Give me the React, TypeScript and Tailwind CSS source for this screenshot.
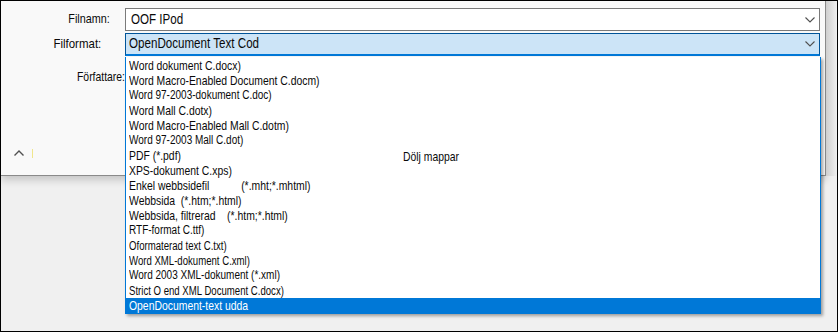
import React from "react";

interface ListItem {
  label: string;
  size: string;
}

const items: ListItem[] = [
  { label: "Word dokument C.docx)", size: "text-[13px]" },
  { label: "Word Macro-Enabled Document C.docm)", size: "text-[13px]" },
  { label: "Word 97-2003-dokument C.doc)", size: "text-[12.5px]" },
  { label: "Word Mall C.dotx)", size: "text-[13px]" },
  { label: "Word Macro-Enabled Mall C.dotm)", size: "text-[13px]" },
  { label: "Word 97-2003 Mall C.dot)", size: "text-[12.5px]" },
  { label: "PDF (*.pdf)", size: "text-[13px]" },
  { label: "XPS-dokument C.xps)", size: "text-[13px]" },
  { label: "Enkel webbsidefil           (*.mht;*.mhtml)", size: "text-[13px]" },
  { label: "Webbsida  (*.htm;*.html)", size: "text-[13px]" },
  { label: "Webbsida, filtrerad    (*.htm;*.html)", size: "text-[13px]" },
  { label: "RTF-format C.ttf)", size: "text-[12.5px]" },
  { label: "Oformaterad text C.txt)", size: "text-[12px]" },
  { label: "Word XML-dokument C.xml)", size: "text-[12px]" },
  { label: "Word 2003 XML-dokument (*.xml)", size: "text-[12.5px]" },
  { label: "Strict O end XML Document C.docx)", size: "text-[12px]" },
];

// liten nedåtpil i kombinationsrutorna
const Chevron = () => (
  <svg width="10" height="6" viewBox="0 0 10 6" className="shrink-0">
    <path d="M0.5 0.5 L5 5 L9.5 0.5" fill="none" stroke="#505050" strokeWidth="1.1" />
  </svg>
);

export default function App() {
  return (
    <div
      className="relative w-[838px] h-[332px] overflow-hidden border border-black bg-[#f0f0f0] text-[#0a0a0a]"
      style={{ fontFamily: '"Liberation Sans", Arial, sans-serif' }}
    >
      <div className="flex h-[175px]">
        {/* dialogpanel */}
        <div className="w-[825px] h-[175px] bg-[#f9f9f9] border-r border-b border-[#8a8a8a] shadow-[0_4px_8px_rgba(0,0,0,0.18)] pt-[7px]">
          <div className="flex items-center h-[23px]">
            <div className="w-[124px] flex justify-end pr-[15px] text-[13.5px]">
              <span className="inline-block origin-right scale-x-[0.8]">Filnamn:</span>
            </div>
            <div className="flex items-center justify-between w-[695px] h-[23px] bg-white border border-[#7a7a7a] pl-[5px] pr-[4px]">
              <span className="inline-block origin-left scale-x-[0.8] text-[14.5px]">OOF IPod</span>
              <Chevron />
            </div>
          </div>
          <div className="flex items-center h-[23px] mt-[2px]">
            <div className="w-[124px] flex justify-end pr-[24px] text-[13.5px]">
              <span className="inline-block origin-right scale-x-[0.85]">Filformat:</span>
            </div>
            <div className="flex items-center justify-between w-[695px] h-[23px] bg-[#cce4f7] border border-[#005499] border-b-2 border-b-[#0078d7] pl-[3px] pr-[4px]">
              <span className="inline-block origin-left scale-x-[0.8] text-[14.5px]">OpenDocument Text Cod</span>
              <Chevron />
            </div>
          </div>
          <div className="flex h-[16px] mt-[11px]">
            <div className="w-[124px] flex justify-end text-[13px]">
              <span className="inline-block origin-right scale-x-[0.8]">Författare:</span>
            </div>
          </div>
          <div className="flex items-center h-[14px] mt-[63px] pl-[13px] gap-[8px]">
            <svg width="10" height="6" viewBox="0 0 10 6">
              <path d="M0.5 5.5 L5 1 L9.5 5.5" fill="none" stroke="#505050" strokeWidth="1.4" />
            </svg>
            <div className="w-px h-[9px] bg-[#f0e68c]" />
          </div>
        </div>
        <div className="flex-1 bg-gradient-to-r from-[#cfcfcf] to-[#f0f0f0]" />
      </div>

      {/* utfälld lista */}
      <div className="absolute left-[124px] top-[56px] w-[696px] h-[257px] bg-white border border-[#0078d7] border-t-0 shadow-[2px_2px_3px_rgba(0,0,0,0.35)] pt-px">
        {items.map((item) => (
          <div key={item.label} className={`flex items-center h-[15px] pl-[3px] whitespace-pre ${item.size}`}>
            <span className="inline-block origin-left scale-x-[0.8]">{item.label}</span>
          </div>
        ))}
        <div className="flex items-center h-[15px] pl-[3px] bg-[#0078d7] text-white text-[13px]">
          <span className="inline-block origin-left scale-x-[0.8]">OpenDocument-text udda</span>
        </div>
      </div>

      <div className="absolute left-[402px] top-[146px] text-[13px]">
        <span className="inline-block origin-left scale-x-[0.8]">Dölj mappar</span>
      </div>
    </div>
  );
}
